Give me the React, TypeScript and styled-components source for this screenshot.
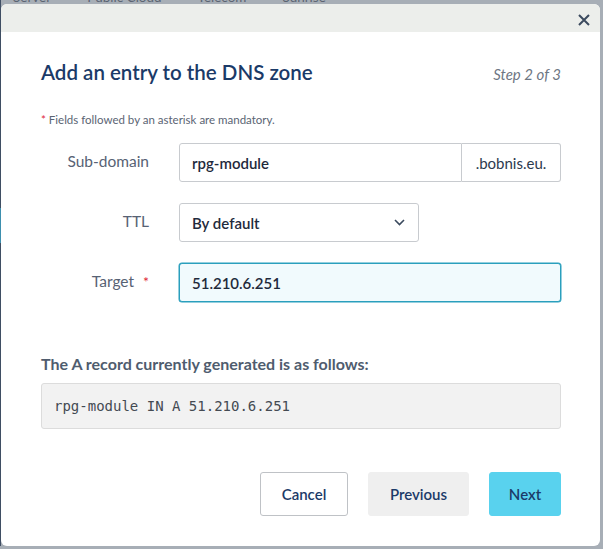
import React from "react";
import styled, { createGlobalStyle } from "styled-components";

const Global = createGlobalStyle`
  html, body { margin: 0; padding: 0; }
  body {
    width: 603px; height: 549px; overflow: hidden;
    background: #a7aeb6;
    font-family: Lato, "Open Sans", sans-serif;
  }
  * { box-sizing: border-box; }
`;

const Page = styled.div`
  position: relative;
  width: 603px;
  height: 549px;
  display: flex;
`;

const SideStrip = styled.div`
  width: 1px;
  height: 549px;
  background: linear-gradient(
    to bottom,
    #3f4e63 0px, #3f4e63 208px,
    #3d8fae 208px, #3d8fae 243px,
    #3f4e63 243px, #3f4e63 546px,
    #a7aeb6 546px
  );
`;

const Nav = styled.div`
  display: flex;
  gap: 36px;
  margin-top: -11px;
  padding-left: 12px;
  font-size: 13.5px;
  color: #5b6472;
  height: 20px;
`;

const Modal = styled.div`
  position: absolute;
  left: 1px;
  top: 4px;
  width: 599px;
  height: 542px;
  background: #fff;
  border-radius: 6px;
  overflow: hidden;
  display: flex;
  flex-direction: column;
`;

const HeaderBand = styled.div`
  height: 29px;
  background: #eceeeb;
  display: flex;
  justify-content: flex-end;
  align-items: center;
  padding-right: 9px;
`;

const CloseButton = styled.button`
  width: 14px;
  height: 14px;
  padding: 0;
  border: 0;
  background: transparent;
  display: flex;
  align-items: center;
  justify-content: center;
  cursor: pointer;
  margin-top: 3px;
`;

const Body = styled.div`
  padding: 28px 39px 30px 40px;
  display: flex;
  flex-direction: column;
`;

const TitleRow = styled.div`
  display: flex;
  justify-content: space-between;
  align-items: baseline;
  height: 24px;
`;

const Title = styled.h1`
  margin: 0;
  font-size: 20.5px;
  line-height: 24px;
  font-weight: 600;
  color: #1b3a68;
`;

const Step = styled.span`
  font-style: italic;
  font-size: 15px;
  color: #6e7683;
`;

const Note = styled.p`
  margin: 29px 0 0 0;
  font-size: 11.5px;
  line-height: 14px;
  color: #5a6473;
`;

const Star = styled.span`
  color: #e0283a;
`;

const Form = styled.div`
  margin-top: 16px;
  display: grid;
  grid-template-columns: 108px 1fr;
  column-gap: 30px;
  row-gap: 21px;
  align-items: center;
`;

const Label = styled.label`
  text-align: right;
  font-size: 15.5px;
  color: #576274;
  margin-top: -3px;
`;

const LabelStar = styled.span`
  color: #e0283a;
  margin-left: 9px;
  font-size: 14px;
`;

const InputGroup = styled.div`
  display: flex;
  height: 39px;
`;

const TextField = styled.div<{ $focused?: boolean; $joined?: boolean }>`
  flex: 1;
  height: 39px;
  display: flex;
  align-items: center;
  padding-left: 12px;
  font-size: 15px;
  font-weight: 600;
  color: #1f2a3c;
  border: 1px solid ${(p) => (p.$focused ? "#2a9fbd" : "#c8cbcf")};
  background: ${(p) => (p.$focused ? "#f1fafd" : "#fff")};
  border-radius: ${(p) => (p.$joined ? "3px 0 0 3px" : "3px")};
  box-shadow: ${(p) => (p.$focused ? "0 0 0 0.5px #2a9fbd" : "none")};
`;

const Addon = styled.div`
  width: 99px;
  height: 39px;
  border: 1px solid #c8cbcf;
  border-left: 0;
  border-radius: 0 3px 3px 0;
  display: flex;
  align-items: center;
  justify-content: center;
  font-size: 15px;
  color: #2c3a4e;
`;

const Select = styled.div`
  width: 240px;
  height: 39px;
  border: 1px solid #c8cbcf;
  border-radius: 3px;
  display: flex;
  align-items: center;
  justify-content: space-between;
  padding: 0 13px 0 12px;
  font-size: 15px;
  font-weight: 600;
  color: #1f2a3c;
`;

const SummaryTitle = styled.h2`
  margin: 52px 0 0 0;
  font-size: 16px;
  line-height: 20px;
  font-weight: 700;
  color: #4f5c6e;
`;

const CodeBox = styled.div`
  margin-top: 9px;
  height: 46px;
  background: #f2f2f2;
  border: 1px solid #dcdcdc;
  border-radius: 3px;
  display: flex;
  align-items: center;
  padding-left: 12px;
  font-family: "DejaVu Sans Mono", "Liberation Mono", monospace;
  font-size: 14px;
  color: #444a52;
`;

const Actions = styled.div`
  margin-top: 43px;
  display: flex;
  justify-content: flex-end;
  gap: 20px;
`;

const Button = styled.button<{ $variant: "outline" | "muted" | "primary"; $w: number }>`
  width: ${(p) => p.$w}px;
  height: 44px;
  border-radius: 3px;
  font-family: inherit;
  font-size: 15px;
  font-weight: 600;
  color: #1b3a68;
  cursor: pointer;
  border: 1px solid
    ${(p) => (p.$variant === "outline" ? "#bfc2c6" : p.$variant === "muted" ? "#efefef" : "#59d2ee")};
  background: ${(p) => (p.$variant === "outline" ? "#fff" : p.$variant === "muted" ? "#efefef" : "#59d2ee")};
`;

export default function App() {
  return (
    <>
      <Global />
      <Page>
        <SideStrip />
        <Nav>
          <span>Server</span>
          <span>Public Cloud</span>
          <span>Telecom</span>
          <span>Sunrise</span>
        </Nav>
        <Modal>
          <HeaderBand>
            <CloseButton aria-label="Close">
              <svg width="12" height="12" viewBox="0 0 12 12">
                <path d="M1 1 L11 11 M11 1 L1 11" stroke="#3b4a5e" strokeWidth="2" strokeLinecap="butt" />
              </svg>
            </CloseButton>
          </HeaderBand>
          <Body>
            <TitleRow>
              <Title>Add an entry to the DNS zone</Title>
              <Step>Step 2 of 3</Step>
            </TitleRow>
            <Note>
              <Star>*</Star> Fields followed by an asterisk are mandatory.
            </Note>
            <Form>
              <Label>Sub-domain</Label>
              <InputGroup>
                <TextField $joined>rpg-module</TextField>
                <Addon>.bobnis.eu.</Addon>
              </InputGroup>
              <Label>TTL</Label>
              <Select>
                <span>By default</span>
                <svg width="11" height="7" viewBox="0 0 11 7">
                  <path d="M1 1 L5.5 5.5 L10 1" fill="none" stroke="#3b4a5e" strokeWidth="1.6" />
                </svg>
              </Select>
              <Label>
                Target<LabelStar>*</LabelStar>
              </Label>
              <InputGroup>
                <TextField $focused>51.210.6.251</TextField>
              </InputGroup>
            </Form>
            <SummaryTitle>The A record currently generated is as follows:</SummaryTitle>
            <CodeBox>rpg-module IN A 51.210.6.251</CodeBox>
            <Actions>
              <Button $variant="outline" $w={88}>Cancel</Button>
              <Button $variant="muted" $w={101}>Previous</Button>
              <Button $variant="primary" $w={72}>Next</Button>
            </Actions>
          </Body>
        </Modal>
      </Page>
    </>
  );
}
